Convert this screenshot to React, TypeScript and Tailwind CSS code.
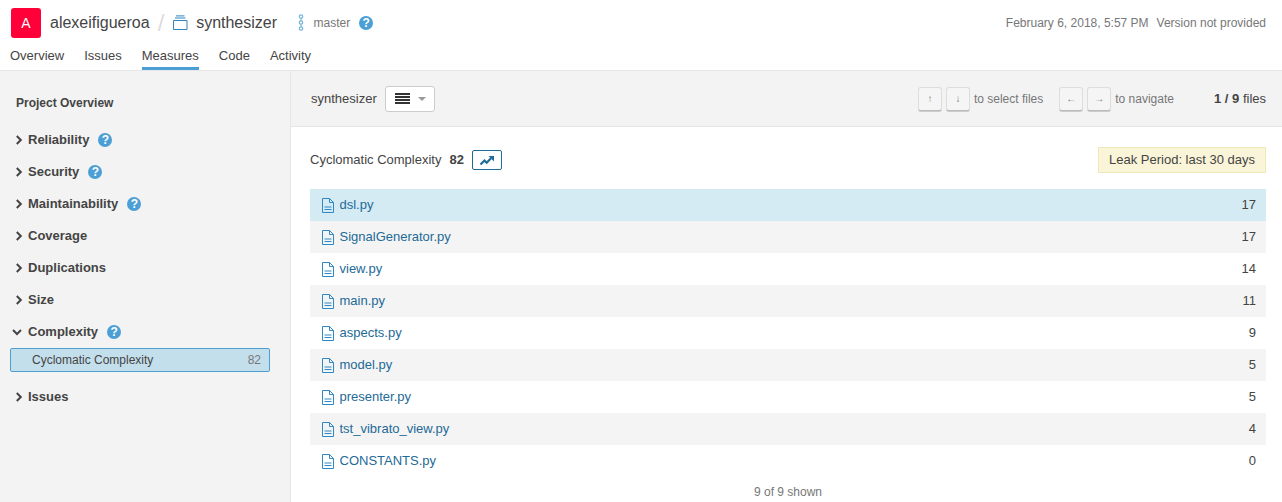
import React from "react";

const files = [
  { name: "dsl.py", value: 17 },
  { name: "SignalGenerator.py", value: 17 },
  { name: "view.py", value: 14 },
  { name: "main.py", value: 11 },
  { name: "aspects.py", value: 9 },
  { name: "model.py", value: 5 },
  { name: "presenter.py", value: 5 },
  { name: "tst_vibrato_view.py", value: 4 },
  { name: "CONSTANTS.py", value: 0 },
];

const domains = [
  { name: "Reliability", help: true },
  { name: "Security", help: true },
  { name: "Maintainability", help: true },
  { name: "Coverage", help: false },
  { name: "Duplications", help: false },
  { name: "Size", help: false },
];

function HelpIcon({ className = "" }: { className?: string }) {
  return (
    <span
      className={`flex h-[14px] w-[14px] shrink-0 items-center justify-center rounded-full bg-[#4b9fd5] text-[12px] leading-none font-bold text-white ${className}`}
    >
      ?
    </span>
  );
}

function Chevron({ open = false }: { open?: boolean }) {
  return (
    <svg width="10" height="10" viewBox="0 0 10 10" className="shrink-0 text-[#444]">
      <path
        d={open ? "M1 3 5 7l4-4" : "M2.8 1 6.8 5l-4 4"}
        fill="none"
        stroke="currentColor"
        strokeWidth="2"
      />
    </svg>
  );
}

function FileIcon() {
  return (
    <svg width="12" height="15" viewBox="0 0 12 15" className="shrink-0">
      <path
        d="M.5.5h7l4 4v10H.5zM7.5.5v4h4M2.5 9h7M2.5 11.5h7"
        fill="none"
        stroke="#3089c4"
        strokeWidth="1"
      />
    </svg>
  );
}

function KeyHint({ label }: { label: string }) {
  return (
    <span className="flex h-6 w-6 items-center justify-center rounded-[3px] border border-[#ddd] border-b-[#bbb] bg-[#f5f5f5] text-[10px] text-[#777] shadow-[0_1px_0_#ccc]">
      {label}
    </span>
  );
}

export default function App() {
  return (
    <div className="flex h-[502px] w-[1282px] flex-col overflow-hidden bg-white font-['Liberation_Sans',sans-serif] text-[13px] text-[#444]">
      <header className="h-[71px] shrink-0 border-b border-[#e6e6e6] px-[10px]">
        <div className="flex h-[46px] items-center pb-[1px]">
          <span className="ml-[1px] flex h-[30px] w-[30px] items-center justify-center rounded-[3px] bg-[#ff0038] text-sm text-white">
            A
          </span>
          <span className="ml-[9px] text-base">alexeifigueroa</span>
          <span className="ml-[8px] w-[7px] text-[24px] leading-none font-light text-[#ddd]">/</span>
          <svg width="15" height="15" viewBox="0 0 15 15" className="ml-[8px]">
            <path d="M.5 5.5h13.5v9H.5zM2 3h10.5M3 .9h8.5" fill="none" stroke="#2f85c0" strokeWidth="1" />
          </svg>
          <span className="ml-[8.5px] text-base">synthesizer</span>
          <svg width="6" height="17" viewBox="0 0 6 17" className="ml-[21px]">
            <g fill="none" stroke="#72b5dc" strokeWidth="1.2">
              <circle cx="3" cy="2.5" r="1.7" />
              <circle cx="3" cy="8.5" r="1.7" />
              <circle cx="3" cy="14.5" r="1.7" />
              <path d="M3 4.2v2.6M3 10.2v2.6" />
            </g>
          </svg>
          <span className="ml-[9.5px] text-xs text-[#777]">master</span>
          <HelpIcon className="ml-[9px]" />
          <span className="ml-auto text-xs text-[#777]">February 6, 2018, 5:57 PM</span>
          <span className="mr-[6px] ml-[8px] text-xs text-[#777]">Version not provided</span>
        </div>
        <nav className="flex h-[24px] gap-[20px]">
          {["Overview", "Issues", "Measures", "Code", "Activity"].map((tab) => (
            <span
              key={tab}
              className={`h-[24px] pt-[1px] leading-[17px] ${tab === "Measures" ? "border-b-[3px] border-[#4b9fd5]" : ""}`}
            >
              {tab}
            </span>
          ))}
        </nav>
      </header>

      <div className="flex min-h-0 flex-1">
        <aside className="w-[291px] shrink-0 border-r border-[#e6e6e6] bg-[#f3f3f3] pt-[24px]">
          <h2 className="mb-[13px] ml-4 text-xs leading-[16px] font-bold">Project Overview</h2>
          {domains.map((d) => (
            <div key={d.name} className="flex h-8 items-center pl-[14px] font-bold">
              <Chevron />
              <span className="ml-1">{d.name}</span>
              {d.help && <HelpIcon className="ml-[9px]" />}
            </div>
          ))}
          <div className="flex h-8 items-center pl-[12px] font-bold">
            <Chevron open />
            <span className="ml-[6px]">Complexity</span>
            <HelpIcon className="ml-[9px]" />
          </div>
          <div className="mr-5 ml-[10px] flex h-6 items-center justify-between rounded-[2px] border border-[#4b9fd5] bg-[#c4dfec] pr-2 pl-[21px] text-xs">
            <span>Cyclomatic Complexity</span>
            <span className="text-[#777]">82</span>
          </div>
          <div className="mt-[9px] flex h-8 items-center pl-[14px] font-bold">
            <Chevron />
            <span className="ml-1">Issues</span>
          </div>
        </aside>

        <main className="min-w-0 flex-1">
          <div className="flex h-[56px] items-center border-b border-[#e6e6e6] bg-[#f3f3f3] pr-4 pl-5">
            <span>synthesizer</span>
            <span className="ml-2 flex h-[26px] w-[50px] items-center rounded-[3px] border border-[#ccc] bg-white pl-[9px]">
              <span className="flex w-[15px] flex-col gap-[1px]">
                <span className="h-[2px] bg-[#333]" />
                <span className="h-[2px] bg-[#333]" />
                <span className="h-[2px] bg-[#333]" />
                <span className="h-[2px] bg-[#333]" />
              </span>
              <span className="ml-2 h-0 w-0 border-x-4 border-t-4 border-x-transparent border-t-[#999]" />
            </span>
            <span className="ml-auto flex items-center gap-1">
              <KeyHint label="↑" />
              <KeyHint label="↓" />
            </span>
            <span className="ml-1 text-xs text-[#777]">to select files</span>
            <span className="ml-4 flex items-center gap-1">
              <KeyHint label="←" />
              <KeyHint label="→" />
            </span>
            <span className="ml-1 text-xs text-[#777]">to navigate</span>
            <span className="ml-10">
              <b>1 / 9</b> files
            </span>
          </div>

          <div className="pr-4 pl-[19px]">
            <div className="flex h-[62px] items-center pt-1">
              <span>Cyclomatic Complexity</span>
              <b className="ml-2">82</b>
              <span className="ml-2 flex h-5 w-[30px] items-center justify-center rounded-[2px] border border-[#236a97]">
                <svg width="16" height="11" viewBox="0 0 16 11">
                  <path d="M1.5 9.5 5.5 5.5l2.2 2.2L12 3.2" fill="none" stroke="#236a97" strokeWidth="2.2" />
                  <path d="M9.5 1H15v5.5z" fill="#236a97" />
                </svg>
              </span>
              <span className="ml-auto flex h-[26px] items-center border border-[#eeeab8] bg-[#faf5d8] px-[10px]">
                Leak Period: last 30 days
              </span>
            </div>

            {files.map((file, i) => (
              <div
                key={file.name}
                className={`flex h-8 items-center pr-[10px] pl-3 ${i === 0 ? "bg-[#d4ebf4]" : i % 2 === 1 ? "bg-[#f4f4f4]" : ""}`}
              >
                <FileIcon />
                <span className="ml-[5.5px] text-[#236a97]">{file.name}</span>
                <span className="ml-auto">{file.value}</span>
              </div>
            ))}

            <p className="mt-[7px] text-center text-xs leading-[16px] text-[#777]">9 of 9 shown</p>
          </div>
        </main>
      </div>
    </div>
  );
}
